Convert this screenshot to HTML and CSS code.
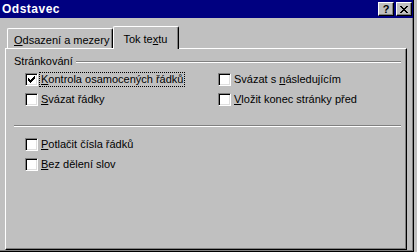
FILE: index.html
```html
<!DOCTYPE html>
<html lang="cs">
<head>
<meta charset="UTF-8" />
<title>Odstavec</title>
<link rel="stylesheet" href="styles.css">
</head>
<body>
<div class="dialog">
  <div class="titlebar">
    <span class="title">Odstavec</span>
    <button class="tbtn help">?</button>
    <button class="tbtn close">
      <svg width="8" height="7" viewBox="0 0 8 7" shape-rendering="crispEdges"><path d="M0 0h2v1h-2z M6 0h2v1h-2z M1 1h2v1h-2z M5 1h2v1h-2z M2 2h4v1h-4z M3 3h2v1h-2z M2 4h4v1h-4z M1 5h2v1h-2z M5 5h2v1h-2z M0 6h2v1h-2z M6 6h2v1h-2z" fill="#000"/></svg>
    </button>
  </div>

  <div class="content">
    <div class="tabs">
      <div class="tab"><u>O</u>dsazení a mezery</div>
      <div class="tab active">Tok te<u>x</u>tu</div>
    </div>

    <div class="panel">
      <div class="group-head">
        <span>Stránkování</span>
        <div class="etch"></div>
      </div>

      <div class="opts">
        <label class="opt"><span class="box"><svg width="7" height="7" viewBox="0 0 7 7" shape-rendering="crispEdges"><path d="M0 2h1v3H0z M1 3h1v3H1z M2 4h1v3H2z M3 3h1v3H3z M4 2h1v3H4z M5 1h1v3H5z M6 0h1v3H6z" fill="#000"/></svg></span><span class="focus"><u>K</u>ontrola osamocených řádků</span></label>
        <label class="opt"><span class="box"></span><span>Svázat s <u>n</u>ásledujícím</span></label>
        <label class="opt"><span class="box"></span><span><u>S</u>vázat řádky</span></label>
        <label class="opt"><span class="box"></span><span><u>V</u>ložit konec stránky před</span></label>
      </div>

      <div class="etch sep"></div>

      <div class="opts single">
        <label class="opt"><span class="box"></span><span><u>P</u>otlačit čísla řádků</span></label>
        <label class="opt"><span class="box"></span><span><u>B</u>ez dělení slov</span></label>
      </div>
    </div>
  </div>
</div>
</body>
</html>
```

FILE: styles.css
```css
body {
  margin: 0; background: #c0c0c0;
  font-family: "Liberation Sans", Arial, sans-serif; font-size: 11px; color: #000;
}
.dialog {
  width: 414px; height: 252px; box-sizing: border-box;
  border-right: 1px solid #000; border-bottom: 1px solid #000;
  box-shadow: inset -1px -1px #808080;
  display: flex; flex-direction: column;
}
.titlebar {
  height: 18px; background: #000080; color: #fff;
  display: flex; align-items: center; padding: 0 1px 0 2px;
}
.title {
  flex: 1; font-weight: bold; font-size: 12px; letter-spacing: 0.5px;
}
.tbtn {
  width: 16px; height: 14px; padding: 0; margin: 0; box-sizing: border-box;
  background: #c0c0c0; border: 1px solid; border-color: #fff #000 #000 #fff;
  box-shadow: inset -1px -1px #808080;
  display: flex; align-items: center; justify-content: center;
  font-family: "Liberation Sans", Arial, sans-serif; font-weight: bold; font-size: 11px; line-height: 1;
}
.close { margin-left: 2px; }
.content {
  flex: 1; display: flex; flex-direction: column;
  padding: 8px 6px 1px 5px;
}
.tabs {
  display: flex; align-items: flex-end; height: 22px; padding-left: 2px;
}
.tab {
  height: 20px; box-sizing: border-box;
  border-top: 1px solid #fff; border-left: 1px solid #fff; border-right: 1px solid #000;
  box-shadow: inset -1px 0 #808080;
  padding: 5px 3px 0 6px; line-height: 13px;
  border-radius: 2px 2px 0 0;
}
.tab.active {
  height: 23px; margin-bottom: -1px; position: relative; z-index: 1;
  background: #c0c0c0; padding: 6px 11px 0 9px;
}
.panel {
  flex: 1;
  border-top: 1px solid #fff; border-left: 1px solid #fff;
  border-right: 1px solid #000; border-bottom: 1px solid #000;
  box-shadow: inset -1px -1px #808080;
  padding: 6px 5px 0 8px;
}
.group-head {
  display: flex; align-items: center; gap: 3px; height: 13px; line-height: 13px;
}
.etch {
  flex: 1; height: 0; border-top: 1px solid #808080; border-bottom: 1px solid #fff;
}
.group-head .etch { margin-top: 1px; }
.opts {
  display: grid; grid-template-columns: 193px auto; row-gap: 7px;
  padding: 5px 0 0 11px;
}
.opts.single { grid-template-columns: auto; padding-top: 11px; }
.sep { flex: none; margin-top: 19px; }
.opt {
  display: flex; align-items: center; gap: 3px; height: 13px; line-height: 13px;
}
.box {
  width: 13px; height: 13px; box-sizing: border-box; flex: none;
  background: #fff; border: 1px solid; border-color: #808080 #fff #fff #808080;
  box-shadow: inset 1px 1px #000, inset -1px -1px #dfdfdf;
  display: flex; align-items: center; justify-content: center;
}
.focus {
  outline: 1px dotted #000; outline-offset: 0; padding: 0 1px; margin-left: -1px;
}
u { text-decoration-thickness: 1px; text-underline-offset: 1px; }
```
